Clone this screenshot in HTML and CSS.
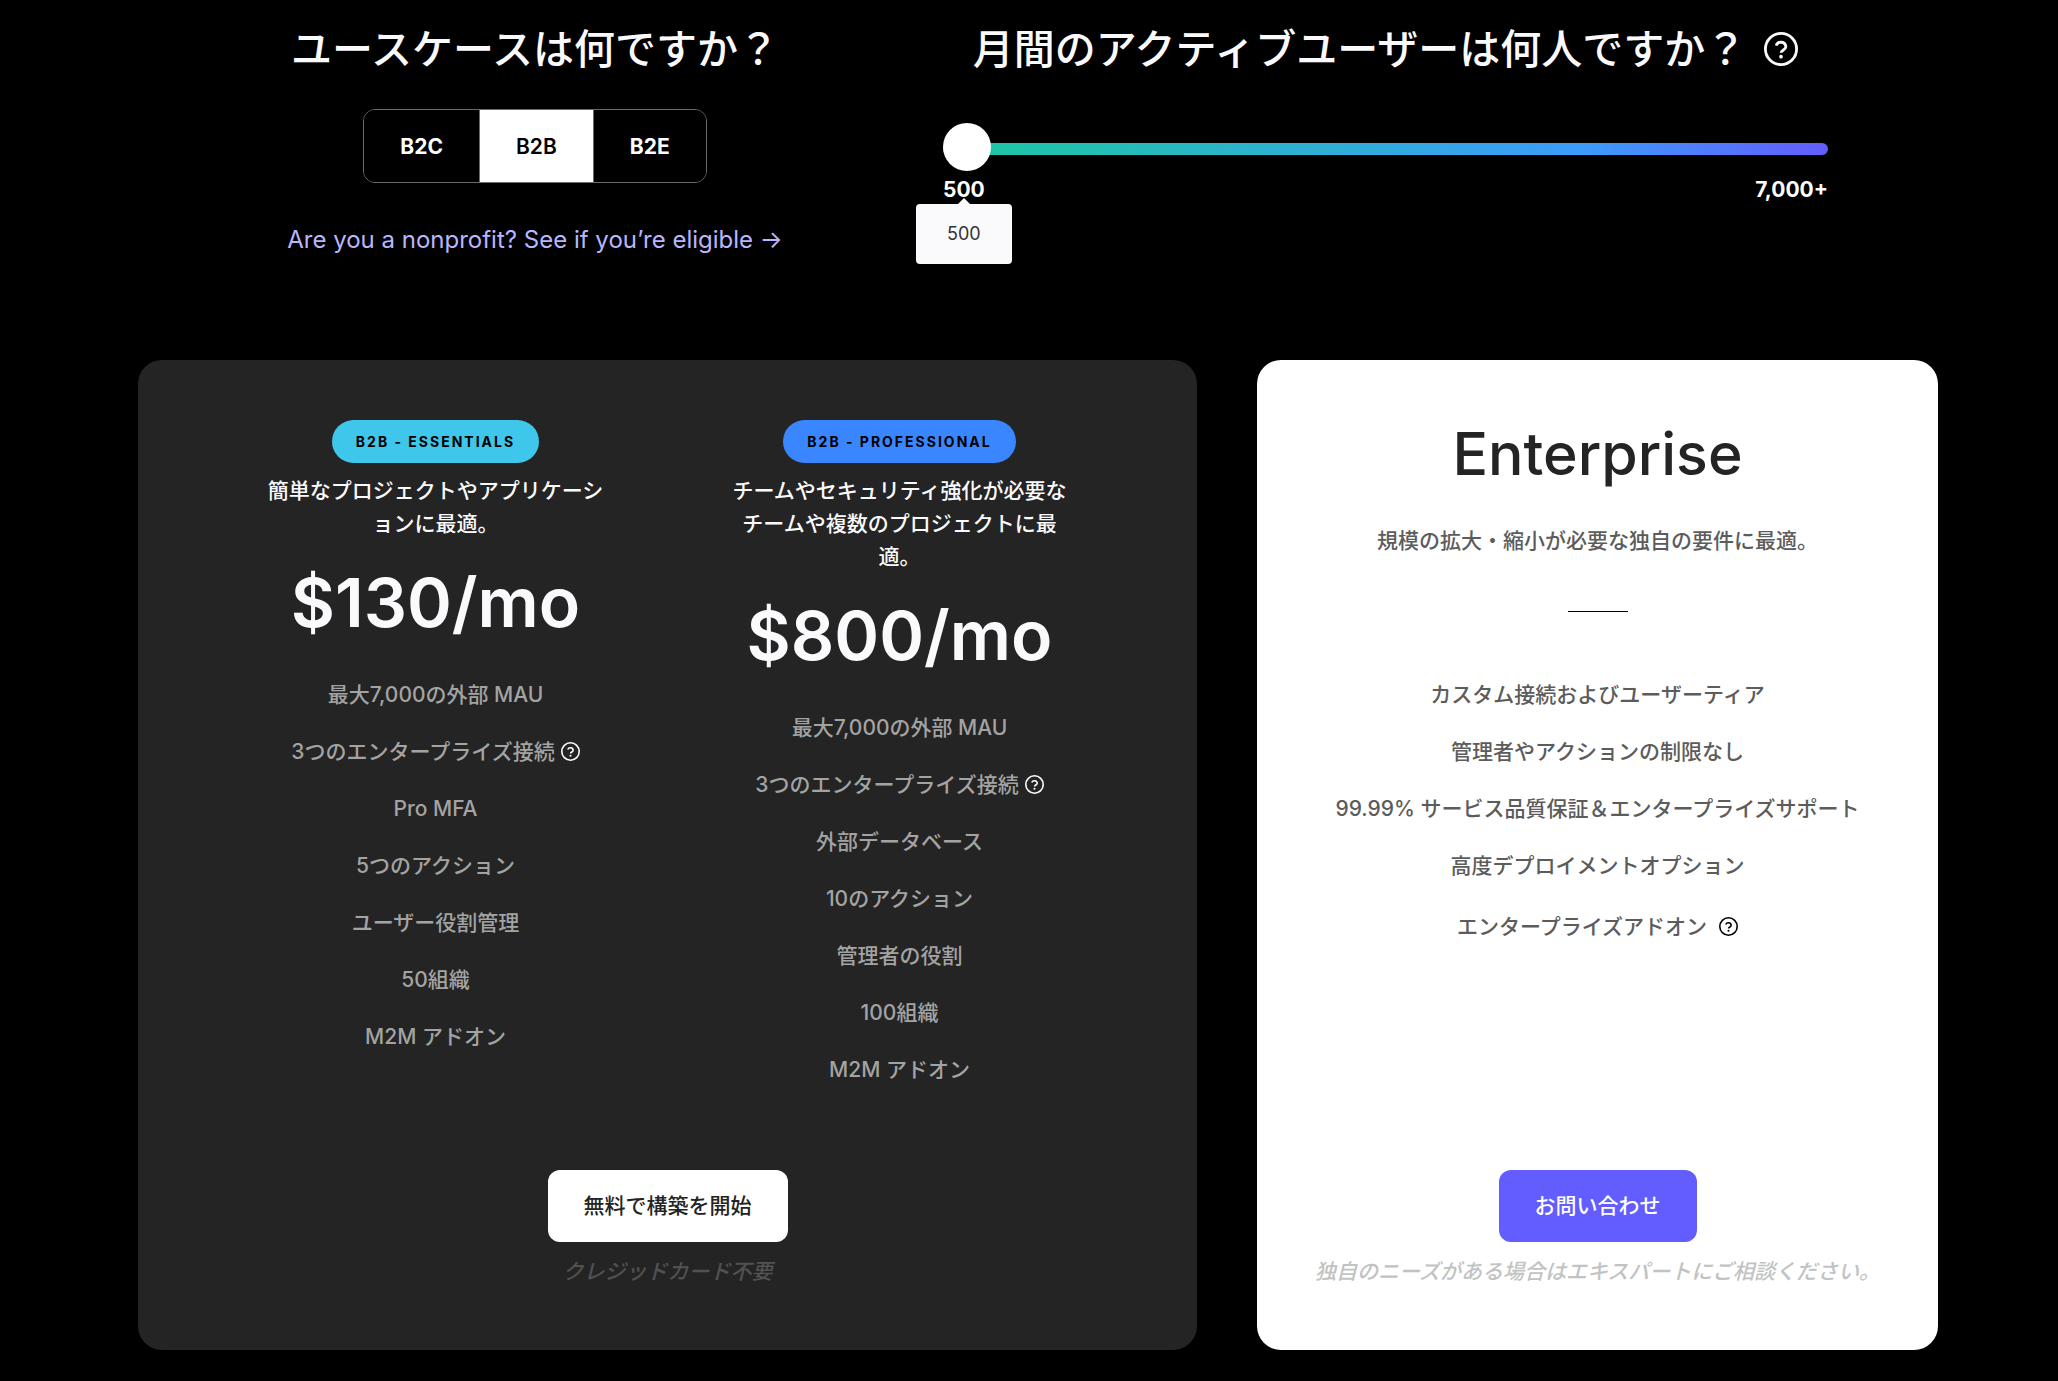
FILE: index.html
```html
<!DOCTYPE html>
<html lang="ja">
<head>
<meta charset="utf-8">
<meta name="viewport" content="width=device-width, initial-scale=1">
<title>料金プラン</title>
<link rel="stylesheet" href="styles.css">
</head>
<body>
<svg class="sprite" aria-hidden="true">
  <symbol id="help" viewBox="0 0 24 24">
    <circle cx="12" cy="12" r="11" fill="none" stroke="currentColor" stroke-width="2"/>
    <path d="M8.6 9.6a3.5 3.5 0 0 1 6.8 .8c0 2.2-3.3 2.3-3.3 4.2" fill="none" stroke="currentColor" stroke-width="2"/>
    <circle cx="12" cy="17.4" r="1.3" fill="currentColor"/>
  </symbol>
</svg>
<main class="page">
  <section class="controls">
    <div class="usecase">
      <h2 class="question">ユースケースは何ですか？</h2>
      <div class="toggle">
        <button class="toggle-item" type="button">B2C</button>
        <button class="toggle-item toggle-item-active" type="button">B2B</button>
        <button class="toggle-item" type="button">B2E</button>
      </div>
      <a class="nonprofit" href="#">Are you a nonprofit? See if you’re eligible →</a>
    </div>
    <div class="users">
      <h2 class="question"><label for="mau">月間のアクティブユーザーは何人ですか？</label><svg class="help-large"><use href="#help"/></svg></h2>
      <input class="slider" id="mau" type="range" min="500" max="7000" value="500">
      <div class="scale">
        <span class="scale-min">500<output class="tooltip" for="mau">500</output></span>
        <span>7,000+</span>
      </div>
    </div>
  </section>
  <section class="plans">
    <article class="card card-dark">
      <div class="tiers">
        <div class="tier">
          <h3 class="badge badge-cyan">B2B - ESSENTIALS</h3>
          <p class="summary">簡単なプロジェクトやアプリケーションに最適。</p>
          <p class="price">$130/mo</p>
          <ul class="features">
            <li>最大7,000の外部 MAU</li>
            <li class="with-help">3つのエンタープライズ接続<svg class="help"><use href="#help"/></svg></li>
            <li>Pro MFA</li>
            <li>5つのアクション</li>
            <li>ユーザー役割管理</li>
            <li>50組織</li>
            <li>M2M アドオン</li>
          </ul>
        </div>
        <div class="tier">
          <h3 class="badge badge-blue">B2B - PROFESSIONAL</h3>
          <p class="summary">チームやセキュリティ強化が必要なチームや複数のプロジェクトに最適。</p>
          <p class="price">$800/mo</p>
          <ul class="features">
            <li>最大7,000の外部 MAU</li>
            <li class="with-help">3つのエンタープライズ接続<svg class="help"><use href="#help"/></svg></li>
            <li>外部データベース</li>
            <li>10のアクション</li>
            <li>管理者の役割</li>
            <li>100組織</li>
            <li>M2M アドオン</li>
          </ul>
        </div>
      </div>
      <div class="action">
        <button class="cta cta-white" type="button">無料で構築を開始</button>
        <p class="note">クレジッドカード不要</p>
      </div>
    </article>
    <article class="card card-light">
      <div class="enterprise">
        <h3 class="enterprise-name">Enterprise</h3>
        <p class="enterprise-summary">規模の拡大・縮小が必要な独自の要件に最適。</p>
        <hr class="rule">
        <ul class="features">
          <li>カスタム接続およびユーザーティア</li>
          <li>管理者やアクションの制限なし</li>
          <li>99.99% サービス品質保証＆エンタープライズサポート</li>
          <li>高度デプロイメントオプション</li>
          <li class="with-help addons">エンタープライズアドオン<svg class="help"><use href="#help"/></svg></li>
        </ul>
      </div>
      <div class="action">
        <button class="cta cta-violet" type="button">お問い合わせ</button>
        <p class="note">独自のニーズがある場合はエキスパートにご相談ください。</p>
      </div>
    </article>
  </section>
</main>
</body>
</html>
```
FILE: styles.css
```css
* {
  box-sizing: border-box;
}

body {
  margin: 0;
  background: #000;
  color: #fafafc;
  font-family: Inter, "Noto Sans CJK JP Medium", "Noto Sans CJK JP", sans-serif;
  font-size: 21px;
  font-weight: 500;
  line-height: 33px;
}

h2, h3, p, ul {
  margin: 0;
  padding: 0;
}

button, input {
  font: inherit;
  margin: 0;
}

.sprite {
  display: none;
}

.page {
  padding: 20px 120px 24px 138px;
}

/* Use case and user count */
.controls {
  display: grid;
  grid-template-columns: 794fr 885fr;
  padding-right: 110px;
  gap: 11px;
  min-height: 340px;
  align-items: start;
}

.usecase {
  display: flex;
  flex-direction: column;
  align-items: center;
}

.question {
  display: flex;
  align-items: center;
  justify-content: center;
  gap: 18px;
  font-size: 41px;
  font-weight: 600;
  line-height: 58px;
  white-space: nowrap;
}

.help-large {
  width: 34px;
  height: 34px;
}

.toggle {
  display: flex;
  margin-top: 31px;
  border: 1px solid #6b6b6b;
  border-radius: 12px;
  overflow: hidden;
}

.toggle-item {
  height: 72px;
  padding: 0 36px;
  border: 0;
  background: #000;
  color: #fff;
  font-weight: 700;
}

.toggle-item + .toggle-item {
  border-left: 1px solid #6b6b6b;
}

.toggle-item-active {
  background: #fff;
  color: #000;
  font-weight: 600;
}

.nonprofit {
  margin-top: 39px;
  color: #b9b6ff;
  font-size: 24px;
  font-weight: 400;
  line-height: 36px;
  text-decoration: none;
}

.slider {
  display: block;
  width: 100%;
  height: 52px;
  margin-top: 45px;
  background: transparent;
  appearance: none;
}

.slider::-webkit-slider-runnable-track {
  height: 12px;
  border-radius: 6px;
  background: linear-gradient(90deg, #1bc99f, #3c9cfb 72%, #635dff);
}

.slider::-webkit-slider-thumb {
  width: 48px;
  height: 48px;
  margin-top: -20px;
  border-radius: 50%;
  background: #fff;
  appearance: none;
}

.scale {
  display: flex;
  justify-content: space-between;
  color: #fff;
  font-weight: 700;
  line-height: 30px;
}

.scale-min {
  position: relative;
}

.tooltip {
  position: absolute;
  top: 29px;
  left: 50%;
  width: 96px;
  margin-left: -48px;
  border-radius: 4px;
  background: #fafafc;
  color: #333;
  font-size: 18px;
  font-weight: 400;
  line-height: 60px;
  text-align: center;
}

.tooltip::before {
  content: "";
  position: absolute;
  bottom: 100%;
  left: 42px;
  border: 6px solid transparent;
  border-top: 0;
  border-bottom-color: #fafafc;
}

/* Plan cards */
.plans {
  display: grid;
  grid-template-columns: 1059fr 681fr;
  gap: 60px;
}

.card {
  display: flex;
  flex-direction: column;
  justify-content: space-between;
  padding: 60px;
  border-radius: 24px;
  text-align: center;
}

.card-dark {
  background: #242424;
}

.card-light {
  padding: 60px 48px;
  background: #fff;
  color: #5c5c5c;
}

.tiers {
  display: grid;
  grid-template-columns: repeat(2, minmax(0, 344px));
  justify-content: center;
  gap: 120px;
}

.tier {
  display: flex;
  flex-direction: column;
  align-items: center;
}

.badge {
  padding: 0 24px;
  border-radius: 22px;
  color: #000;
  font-size: 14px;
  font-weight: 700;
  letter-spacing: 2px;
  line-height: 43px;
}

.badge-cyan {
  background: #3fc6eb;
}

.badge-blue {
  background: #3a86ff;
}

.summary {
  margin-top: 11px;
  font-weight: 600;
}

.price {
  margin: 21px 0 35px;
  font-size: 68px;
  font-weight: 600;
  line-height: 82px;
}

.features {
  display: flex;
  flex-direction: column;
  gap: 24px;
  list-style: none;
}

.card-dark .features {
  color: #a3a3a3;
}

.with-help {
  display: flex;
  align-items: center;
  justify-content: center;
  gap: 6px;
}

.help {
  width: 19px;
  height: 19px;
  color: #fff;
}

.addons {
  gap: 12px;
  padding-top: 4px;
}

.addons .help {
  color: #000;
}

.enterprise-name {
  color: #242424;
  font-size: 59px;
  font-weight: 500;
  line-height: 68px;
}

.enterprise-summary {
  margin-top: 36px;
}

.rule {
  width: 60px;
  margin: 54px auto 66px;
  border: 0;
  border-top: 1px solid #000;
}

.action {
  margin-top: 84px;
}

.cta {
  height: 72px;
  padding: 0 36px 2px;
  border: 0;
  border-radius: 12px;
  vertical-align: top;
}

.cta-white {
  background: #fff;
  color: #242424;
}

.cta-violet {
  background: #635dff;
  color: #fff;
}

.note {
  margin-top: 13px;
  padding-bottom: 2px;
  color: #515151;
  font-style: italic;
}

.card-light .note {
  color: #c1c3c3;
}
```
